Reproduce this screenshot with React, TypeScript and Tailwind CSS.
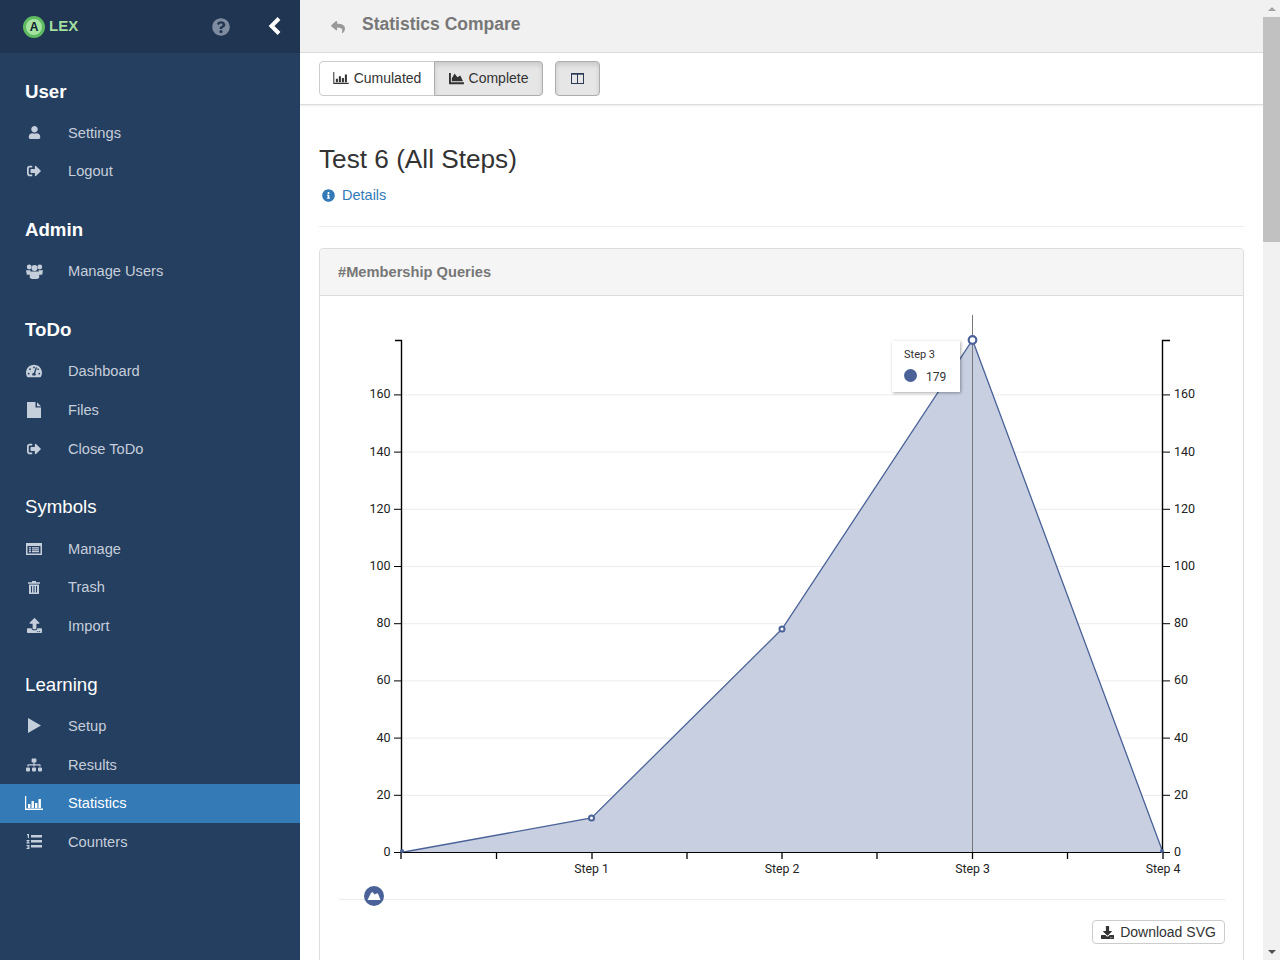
import { ReactNode } from "react";
import {
    FaChartArea,
    FaDownload,
    FaInfoCircle,
    FaQuestionCircle,
    FaReply,
    FaSignOutAlt,
    FaSitemap,
    FaTachometerAlt,
    FaUpload,
    FaUser,
} from "react-icons/fa";

function BarsIcon(props: { className?: string }) {
    return (
        <svg viewBox="0 0 18 14" className={props.className} fill="currentColor">
            <path d="M0 0h1.2v12.6H18V14H0z" />
            <path d="M3 8h2.4v4H3zM6.5 5h2.4v7H6.5zM10 7h2.4v5H10zM13.5 3h2.4v9h-2.4z" />
        </svg>
    );
}

function ColumnsIcon() {
    return (
        <svg viewBox="0 0 13 11" className="w-[13px] h-[11px]" fill="none" stroke="#2b3a55" strokeWidth="1">
            <rect x="0.5" y="0.5" width="12" height="10" />
            <path d="M6.5 0.5v10" />
            <path d="M0.5 1.2h12" />
        </svg>
    );
}

function FileIcon() {
    return (
        <svg viewBox="0 0 14 16" className="w-[14px] h-[16px]" fill="currentColor">
            <path d="M0 0h8.5v5.5H14V16H0z" />
            <path d="M10 0.3L14 4.2H10z" />
        </svg>
    );
}

function ListBoxIcon() {
    return (
        <svg viewBox="0 0 16 12" className="w-[16px] h-[12px]" fill="currentColor">
            <path
                fillRule="evenodd"
                d="M0 0h16v12H0zM1.5 3v7.5h13V3zM3 4.3h2v1.2H3zM6 4.3h7v1.2H6zM3 6.2h2v1.2H3zM6 6.2h7v1.2H6zM3 8.1h2v1.2H3zM6 8.1h7v1.2H6z"
            />
        </svg>
    );
}

function UsersIcon() {
    return (
        <svg viewBox="0 0 17 15" className="w-[17px] h-[15px]" fill="currentColor">
            <circle cx="3.2" cy="3" r="2.4" />
            <circle cx="13.8" cy="3" r="2.4" />
            <path d="M0 6.2h4.5v4.5H0.8zM12.5 6.2H17l-0.8 4.5h-3.7z" />
            <circle cx="8.5" cy="4" r="3" />
            <path d="M4.8 7.5h7.4l1 1v5.5L11 15H6l-2.2-1V8.5z" />
        </svg>
    );
}

function PlayIcon() {
    return (
        <svg viewBox="0 0 13 15" className="w-[13px] h-[15px]" fill="currentColor">
            <path d="M0 0L13 7.5L0 15z" />
        </svg>
    );
}

function TrashIcon() {
    return (
        <svg viewBox="0 0 12 13" className="w-[12px] h-[13px]" fill="currentColor">
            <path d="M4 0h4v1.2h4v1.6H0V1.2h4z" />
            <path
                fillRule="evenodd"
                d="M1 3.6h10V13H1zM3 5v6.5h1V5zM5.5 5v6.5h1V5zM8 5v6.5h1V5z"
            />
        </svg>
    );
}

function CountersIcon() {
    return (
        <svg viewBox="0 0 16 15" className="w-[16px] h-[15px]" fill="currentColor">
            <path d="M5 1h11v2.6H5zM5 6h11v2.6H5zM5 11h11v2.6H5z" />
            <path d="M1 0h2v4H1.8V1.2H1zM0.5 6h3v1L2 8.3h1.5V9.5h-3v-1L2 7.2H0.5zM0.5 11h3v4h-3v-1h2v-.5h-1.5v-1H2.5V12h-2z" />
        </svg>
    );
}

const groups: { title: string; bold?: boolean; items: { label: string; icon: ReactNode; active?: boolean }[] }[] = [
    {
        title: "User",
        bold: true,
        items: [
            { label: "Settings", icon: <FaUser className="text-[13px]" /> },
            { label: "Logout", icon: <FaSignOutAlt className="text-[14px]" /> },
        ],
    },
    {
        title: "Admin",
        bold: true,
        items: [{ label: "Manage Users", icon: <UsersIcon /> }],
    },
    {
        title: "ToDo",
        bold: true,
        items: [
            { label: "Dashboard", icon: <FaTachometerAlt className="text-[16px]" /> },
            { label: "Files", icon: <FileIcon /> },
            { label: "Close ToDo", icon: <FaSignOutAlt className="text-[14px]" /> },
        ],
    },
    {
        title: "Symbols",
        items: [
            { label: "Manage", icon: <ListBoxIcon /> },
            { label: "Trash", icon: <TrashIcon /> },
            { label: "Import", icon: <FaUpload className="text-[15px]" /> },
        ],
    },
    {
        title: "Learning",
        items: [
            { label: "Setup", icon: <PlayIcon /> },
            { label: "Results", icon: <FaSitemap className="text-[16px]" /> },
            { label: "Statistics", icon: <BarsIcon className="w-[18px] h-[14px]" />, active: true },
            { label: "Counters", icon: <CountersIcon /> },
        ],
    },
];

function Sidebar() {
    return (
        <aside className="w-[300px] shrink-0 bg-[#253f60] flex flex-col">
            <div className="h-[53px] shrink-0 bg-[#1f3551] flex items-center pl-[23px]">
                <span className="w-[22px] h-[22px] rounded-full bg-[#a6e3a1] border-[3px] border-[#5fbb62] flex items-center justify-center text-[12px] font-bold text-[#10202f]">
                    A
                </span>
                <span className="ml-[4px] text-[15px] font-bold text-[#a2dfa0]">LEX</span>
                <FaQuestionCircle className="ml-[134px] text-[18px] text-[#7f8ca0]" />
                <svg viewBox="0 0 13 18" className="ml-[38px] w-[13px] h-[18px] -mt-[1px]" fill="none" stroke="#fff" strokeWidth="4">
                    <path d="M11 1.5L3.5 9l7.5 7.5" />
                </svg>
            </div>
            <nav className="pt-[16.5px] flex flex-col gap-[17.3px]">
                {groups.map((group) => (
                    <div key={group.title}>
                        <h4 className={`h-[44px] pl-[25px] flex items-center text-[18.67px] text-white ${group.bold ? "font-bold" : "font-normal"}`}>
                            {group.title}
                        </h4>
                        {group.items.map((item) => (
                            <a
                                key={item.label}
                                className={`h-[38.67px] flex items-center ${item.active ? "bg-[#337ab7] text-white" : "text-[#c5cedb]"}`}
                            >
                                <span className="w-[68px] pl-[25px] pr-[25px] flex justify-center shrink-0">{item.icon}</span>
                                <span className="text-[14.67px]">{item.label}</span>
                            </a>
                        ))}
                    </div>
                ))}
            </nav>
        </aside>
    );
}

const ticks = [0, 20, 40, 60, 80, 100, 120, 140, 160];
const yOf = (v: number) => 556.5 - v * 2.86;
const xTicks = [81, 176.5, 272, 367, 462, 557, 652.5, 747.5, 843];
const steps = [
    { label: "Step 1", x: 271.5 },
    { label: "Step 2", x: 462 },
    { label: "Step 3", x: 652.5 },
    { label: "Step 4", x: 843 },
];
const LEFT = 81;
const RIGHT = 843;
const pts = "81,556.5 271.5,522 462,333 652.5,44 843,556.5";

// chart coordinates start at the panel body's top left corner (320, 296)
function Chart() {
    return (
        <svg width="923" height="610" className="block" style={{ fontFamily: "Roboto, sans-serif" }}>
            {ticks.slice(1).map((t) => (
                <line key={t} x1={LEFT} x2={RIGHT} y1={yOf(t)} y2={yOf(t)} stroke="#ececec" />
            ))}
            <polygon points={pts} fill="#c7cfe0" />
            <polyline points={pts} fill="none" stroke="#4a6298" strokeWidth="1.3" />
            <line x1="652.5" x2="652.5" y1="19" y2="556" stroke="#777" />

            <path d={`M${LEFT - 6} 44.5H${LEFT + 0.5}V556.5`} fill="none" stroke="#000" strokeWidth="1.4" />
            <path d={`M${RIGHT + 7} 44.5H${RIGHT - 0.5}V556.5`} fill="none" stroke="#000" strokeWidth="1.4" />
            <line x1={LEFT} x2={RIGHT} y1="556.5" y2="556.5" stroke="#000" />
            {xTicks.map((x) => (
                <line key={x} x1={x} x2={x} y1="556" y2="563" stroke="#000" strokeWidth="1.3" />
            ))}
            {ticks.map((t) => (
                <g key={t} fontSize="12.5" fill="#222">
                    <line x1={LEFT - 7} x2={LEFT} y1={yOf(t)} y2={yOf(t)} stroke="#000" />
                    <line x1={RIGHT} x2={RIGHT + 7} y1={yOf(t)} y2={yOf(t)} stroke="#000" />
                    <text x={LEFT - 10.5} y={yOf(t) + 3.5} textAnchor="end">{t}</text>
                    <text x={RIGHT + 11} y={yOf(t) + 3.5}>{t}</text>
                </g>
            ))}
            {steps.map((s) => (
                <text key={s.label} x={s.x} y="577" fontSize="12.3" fill="#222" textAnchor="middle">{s.label}</text>
            ))}

            <circle cx="82" cy="555" r="2" fill="#4a6298" />
            <circle cx="842" cy="555" r="2" fill="#4a6298" />
            <circle cx="271.5" cy="522" r="2.5" fill="#fff" stroke="#4a6298" strokeWidth="2" />
            <circle cx="462" cy="333" r="2.5" fill="#fff" stroke="#4a6298" strokeWidth="2" />
            <circle cx="652.5" cy="44" r="3.8" fill="#fff" stroke="#4a6298" strokeWidth="2.2" />

            <line x1="19" x2="905" y1="603.5" y2="603.5" stroke="#ececec" />
            <circle cx="54" cy="600" r="10" fill="#4a6298" />
            <path d="M47.5 604 L51 597 L52.5 596 L54.5 598.5 L56.5 597.5 L58 597.5 L60.5 604 Z" fill="#fff" />
        </svg>
    );
}

export default function App() {
    return (
        <div className="w-[1280px] h-[960px] overflow-hidden flex bg-white text-[#333]" style={{ fontFamily: '"Liberation Sans", Arial, sans-serif' }}>
            <Sidebar />
            <main className="w-[963px] shrink-0 flex flex-col">
                <div className="h-[53px] shrink-0 bg-[#f1f1f1] border-b border-[#ddd] flex items-center pl-[31px] pb-[3px]">
                    <FaReply className="text-[14px] text-[#999] mt-[4px]" />
                    <h2 className="ml-[17px] text-[17.5px] font-bold text-[#777]">Statistics Compare</h2>
                </div>
                <div className="h-[52px] shrink-0 border-b border-[#ddd] shadow-[0_1px_2px_rgba(0,0,0,0.08)] flex items-center pl-[19px] pb-[1px]">
                    <div className="flex h-[35px] text-[14px]">
                        <button className="w-[116px] border border-[#ccc] rounded-l-[4px] flex items-center justify-center gap-[5px]">
                            <BarsIcon className="w-[16px] h-[12px]" />
                            Cumulated
                        </button>
                        <button className="w-[109px] -ml-px border border-[#adadad] rounded-r-[4px] bg-[#e6e6e6] shadow-[inset_0_3px_5px_rgba(0,0,0,0.125)] flex items-center justify-center gap-[5px]">
                            <FaChartArea className="text-[15px]" />
                            Complete
                        </button>
                    </div>
                    <button className="ml-[12px] w-[45px] h-[35px] border border-[#adadad] rounded-[4px] bg-[#e6e6e6] shadow-[inset_0_3px_5px_rgba(0,0,0,0.125)] flex items-center justify-center">
                        <ColumnsIcon />
                    </button>
                </div>
                <div className="pl-[19px] pr-[19px] pt-[39px]">
                    <h3 className="text-[26.2px] leading-[30px] text-[#333]">Test 6 (All Steps)</h3>
                    <a className="mt-[11px] flex items-center gap-[7px] pl-[3px] text-[14.5px] leading-[20px] text-[#337ab7]">
                        <FaInfoCircle className="text-[13px]" />
                        Details
                    </a>
                    <hr className="mt-[21px] border-[#eee]" />
                    <section className="relative mt-[21px] border border-[#ddd] rounded-[4px]">
                        <div className="h-[47px] pl-[18px] bg-[#f5f5f5] border-b border-[#ddd] flex items-center text-[14.67px] font-bold text-[#777] rounded-t-[4px]">
                            #Membership Queries
                        </div>
                        <Chart />
                        <div className="flex justify-end pr-[18px] pt-[14px] pb-[20px]">
                            <button className="h-[24px] w-[133px] border border-[#ccc] rounded-[4px] flex items-center justify-center gap-[6px] text-[14px]">
                                <FaDownload className="text-[13px]" />
                                Download SVG
                            </button>
                        </div>
                        <div
                            className="absolute left-[572px] top-[92px] w-[68px] h-[51px] bg-white shadow-[1px_1px_3px_rgba(0,0,0,0.35)] text-[#333] pl-[12px] pt-[7px]"
                            style={{ fontFamily: "Roboto, sans-serif" }}
                        >
                            <div className="text-[11px] leading-[13px]">Step 3</div>
                            <div className="mt-[8px] flex items-center text-[12px] leading-[14px]">
                                <span className="w-[13px] h-[13px] rounded-full bg-[#4a6298] -mt-[3px]" />
                                <span className="ml-[9px] mt-[1px]">179</span>
                            </div>
                        </div>
                    </section>
                </div>
            </main>
            <div className="w-[17px] shrink-0 bg-[#f1f1f1] flex flex-col items-center">
                <div className="h-[17px] flex items-center justify-center">
                    <span className="border-x-[4px] border-b-[4px] border-x-transparent border-b-[#a3a3a3]" />
                </div>
                <div className="h-[225px] w-full bg-[#c1c1c1]" />
                <div className="flex-1" />
                <div className="h-[17px] flex items-center justify-center">
                    <span className="border-x-[4px] border-t-[4px] border-x-transparent border-t-[#505050]" />
                </div>
            </div>
        </div>
    );
}
